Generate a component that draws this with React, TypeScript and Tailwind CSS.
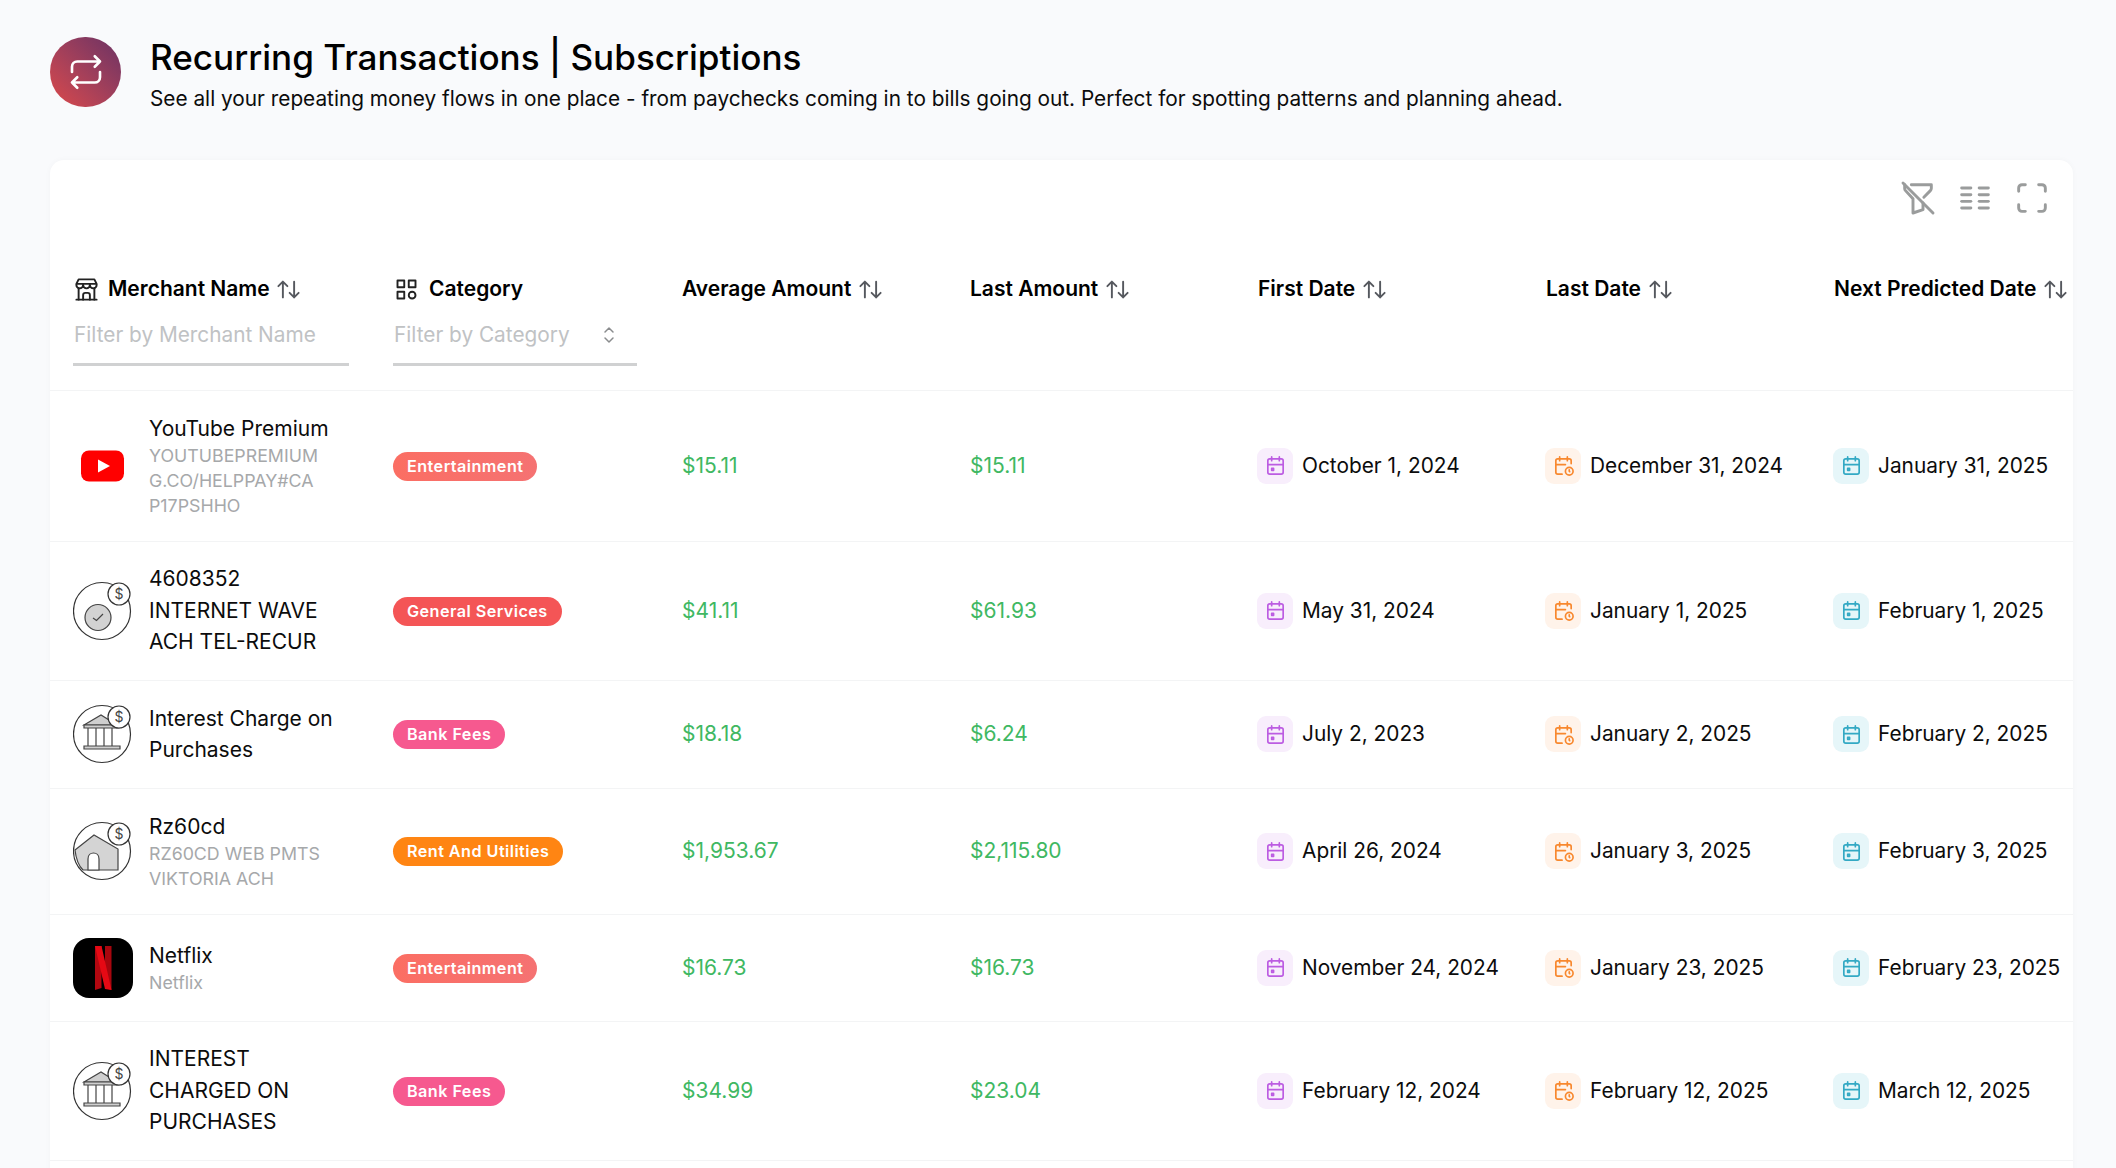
import {
  TbArrowsSort,
  TbBuildingStore,
  TbCalendarClock,
  TbCalendarEvent,
  TbCategory,
  TbColumns,
  TbFilterOff,
  TbMaximize,
  TbRepeat,
  TbSelector,
} from 'react-icons/tb';

type Logo = 'youtube' | 'clock' | 'bank' | 'house' | 'netflix';

interface Row {
  height: string;
  logo: Logo;
  name: string;
  sub?: string;
  category: string;
  badge: string;
  average: string;
  last: string;
  first: string;
  lastDate: string;
  next: string;
}

const rows: Row[] = [
  {
    height: 'h-[151px]',
    logo: 'youtube',
    name: 'YouTube Premium',
    sub: 'YOUTUBEPREMIUM G.CO/HELPPAY#CA P17PSHHO',
    category: 'Entertainment',
    badge: 'bg-linear-to-r from-[#fb6e63] to-[#f57272]',
    average: '$15.11',
    last: '$15.11',
    first: 'October 1, 2024',
    lastDate: 'December 31, 2024',
    next: 'January 31, 2025',
  },
  {
    height: 'h-[139px]',
    logo: 'clock',
    name: '4608352 INTERNET WAVE ACH TEL-RECUR',
    category: 'General Services',
    badge: 'bg-[#f45556]',
    average: '$41.11',
    last: '$61.93',
    first: 'May 31, 2024',
    lastDate: 'January 1, 2025',
    next: 'February 1, 2025',
  },
  {
    height: 'h-[108px]',
    logo: 'bank',
    name: 'Interest Charge on Purchases',
    category: 'Bank Fees',
    badge: 'bg-[#f6598f]',
    average: '$18.18',
    last: '$6.24',
    first: 'July 2, 2023',
    lastDate: 'January 2, 2025',
    next: 'February 2, 2025',
  },
  {
    height: 'h-[126px]',
    logo: 'house',
    name: 'Rz60cd',
    sub: 'RZ60CD WEB PMTS VIKTORIA ACH',
    category: 'Rent And Utilities',
    badge: 'bg-[#ff8513]',
    average: '$1,953.67',
    last: '$2,115.80',
    first: 'April 26, 2024',
    lastDate: 'January 3, 2025',
    next: 'February 3, 2025',
  },
  {
    height: 'h-[107px]',
    logo: 'netflix',
    name: 'Netflix',
    sub: 'Netflix',
    category: 'Entertainment',
    badge: 'bg-linear-to-r from-[#fb6e63] to-[#f57272]',
    average: '$16.73',
    last: '$16.73',
    first: 'November 24, 2024',
    lastDate: 'January 23, 2025',
    next: 'February 23, 2025',
  },
  {
    height: 'h-[139px]',
    logo: 'bank',
    name: 'INTEREST CHARGED ON PURCHASES',
    category: 'Bank Fees',
    badge: 'bg-[#f6598f]',
    average: '$34.99',
    last: '$23.04',
    first: 'February 12, 2024',
    lastDate: 'February 12, 2025',
    next: 'March 12, 2025',
  },
];

function DollarBadge({ cx = 46, cy = 13 }: { cx?: number; cy?: number }) {
  return (
    <g>
      <circle cx={cx} cy={cy} r="11" fill="#fff" stroke="#333" strokeWidth="1.2" />
      <text x={cx} y={cy + 5} textAnchor="middle" fontSize="14" fill="#444" fontFamily="Inter, sans-serif">
        $
      </text>
    </g>
  );
}

function MerchantLogo({ logo }: { logo: Logo }) {
  if (logo === 'youtube') {
    return (
      <svg width="60" height="60" viewBox="0 0 60 60">
        <rect x="8" y="14.5" width="43" height="31" rx="8" fill="#f00" />
        <path d="M25 23.5 L25 36.5 L37 30 Z" fill="#fff" />
      </svg>
    );
  }
  if (logo === 'netflix') {
    return (
      <svg width="60" height="60" viewBox="0 0 60 60">
        <rect width="60" height="60" rx="16" fill="#000" />
        <path d="M22 8 H28.5 V50 L22 52 Z" fill="#b20710" />
        <path d="M32 8 H38.5 V52 L32 50 Z" fill="#a8060e" />
        <path d="M22 8 H28.5 L38.5 52 L32 51 Z" fill="#e50914" />
      </svg>
    );
  }
  return (
    <svg width="60" height="60" viewBox="0 0 60 60">
      <circle cx="29" cy="30" r="28.5" fill="#fff" stroke="#333" strokeWidth="1.2" />
      {logo === 'clock' && (
        <g>
          <circle cx="25" cy="36.5" r="13" fill="#d2d2d2" stroke="#444" strokeWidth="1.2" />
          <path d="M20 37 L23.5 39.5 L30 33" fill="none" stroke="#444" strokeWidth="1.2" />
        </g>
      )}
      {logo === 'bank' && (
        <g stroke="#444" strokeWidth="1.2">
          <path d="M11 21 L28 11 L44 21 Z" fill="#cfcfcf" />
          <path d="M11 21 H46 V24 H11 Z" fill="#cfcfcf" />
          <path d="M15 24 V42 M23 24 V42 M31 24 V42 M39 24 V42" fill="none" />
          <path d="M11 42 H47 V45 H11 Z" fill="#cfcfcf" />
        </g>
      )}
      {logo === 'house' && (
        <g stroke="#444" strokeWidth="1.2">
          <path d="M2 29 L21 14 L45 28 V49 H10 C6 45 3 38 2 29 Z" fill="#d4d4d4" />
          <path d="M15 49 V38 C15 30 26 30 26 38 V49 Z" fill="#fff" />
        </g>
      )}
      <DollarBadge />
    </svg>
  );
}

function SortIcon() {
  return <TbArrowsSort className="h-[27px] w-[27px] shrink-0 text-[#55585e]" strokeWidth={1.7} />;
}

function HeadCell({ label }: { label: string }) {
  return (
    <th className="px-[23px] pt-[42px] text-left align-top">
      <div className="flex h-[30px] items-center gap-[5.5px] whitespace-nowrap text-[21px] font-semibold text-black">
        {label}
        <SortIcon />
      </div>
    </th>
  );
}

function DateCell({ value, kind }: { value: string; kind: 'first' | 'last' | 'next' }) {
  const box =
    kind === 'first'
      ? 'bg-[#f8eefc] text-[#bc5ce2]'
      : kind === 'last'
        ? 'bg-[#fff3ea] text-[#f8882e]'
        : 'bg-[#e6f6f9] text-[#33a9c4]';
  return (
    <td className="px-[22px]">
      <div className="flex items-center gap-[9px] whitespace-nowrap text-[20.85px] text-[#0c0c0c]">
        <span className={`flex h-[36px] w-[36px] shrink-0 items-center justify-center rounded-[9px] ${box}`}>
          {kind === 'last' ? (
            <TbCalendarClock className="h-[23px] w-[23px]" strokeWidth={1.75} />
          ) : (
            <TbCalendarEvent className="h-[23px] w-[23px]" strokeWidth={1.75} />
          )}
        </span>
        {value}
      </div>
    </td>
  );
}

export default function App() {
  return (
    <div className="h-screen overflow-hidden bg-[#f9fafc] pl-[50px] pr-[43px] pt-[37px] font-['Inter',sans-serif]">
      <header className="flex items-start gap-[29px]">
        <div className="flex h-[70px] w-[71px] shrink-0 items-center justify-center rounded-full bg-linear-to-tr from-[#dc4848] to-[#6b3163]">
          <TbRepeat className="h-[42px] w-[42px] text-white" strokeWidth={1.5} />
        </div>
        <div>
          <h1 className="text-[35.1px] leading-[41px] font-medium text-black">Recurring Transactions | Subscriptions</h1>
          <p className="mt-[6px] text-[20.8px] leading-[30px] text-[#0c0c0c]">
            See all your repeating money flows in one place - from paychecks coming in to bills going out. Perfect for
            spotting patterns and planning ahead.
          </p>
        </div>
      </header>

      <section className="mt-[46px] min-h-[1100px] overflow-hidden rounded-t-[14px] bg-white shadow-[0_0_6px_rgba(0,0,0,0.03)]">
        <div className="flex h-[72px] items-center justify-end gap-[17px] pt-[4px] pr-[21px] text-[#9a9c9c]">
          <TbFilterOff className="h-[40px] w-[40px]" strokeWidth={1.75} />
          <TbColumns className="h-[40px] w-[40px]" strokeWidth={1.75} />
          <TbMaximize className="h-[40px] w-[40px]" strokeWidth={1.75} />
        </div>

        <table className="w-[2049px] table-fixed border-collapse">
          <colgroup>
            <col className="w-[321px]" />
            <col className="w-[288px]" />
            <col className="w-[288px]" />
            <col className="w-[288px]" />
            <col className="w-[288px]" />
            <col className="w-[288px]" />
            <col className="w-[288px]" />
          </colgroup>
          <thead>
            <tr className="h-[158px] border-b border-[#f3f4f5]">
              <th className="pt-[42px] pr-[22px] pl-[23px] text-left align-top">
                <div className="flex h-[30px] items-center whitespace-nowrap text-[21px] font-semibold text-black">
                  <TbBuildingStore className="mr-[8px] h-[27px] w-[27px] text-[#222]" strokeWidth={1.7} />
                  Merchant Name
                  <span className="ml-[5.5px]">
                    <SortIcon />
                  </span>
                </div>
                <div className="flex h-[62px] items-center whitespace-nowrap border-b-[3px] border-[#d0d1d2] pt-[3px] pl-[1px] text-[20.8px] font-normal text-[#c0c2c4]">
                  Filter by Merchant Name
                </div>
              </th>
              <th className="px-[22px] pt-[42px] text-left align-top">
                <div className="flex h-[30px] items-center whitespace-nowrap text-[21px] font-semibold text-black">
                  <TbCategory className="mr-[9px] h-[27px] w-[27px] text-[#222]" strokeWidth={1.7} />
                  Category
                </div>
                <div className="flex h-[62px] items-center justify-between whitespace-nowrap border-b-[3px] border-[#d0d1d2] pt-[3px] pr-[16px] pl-[1px] text-[20.8px] font-normal text-[#c0c2c4]">
                  Filter by Category
                  <TbSelector className="h-[24px] w-[24px] text-[#8a8c8e]" strokeWidth={1.5} />
                </div>
              </th>
              <HeadCell label="Average Amount" />
              <HeadCell label="Last Amount" />
              <HeadCell label="First Date" />
              <HeadCell label="Last Date" />
              <HeadCell label="Next Predicted Date" />
            </tr>
          </thead>
          <tbody>
            {rows.map((row) => (
              <tr key={row.name} className={`${row.height} border-b border-[#f3f4f5]`}>
                <td className="pl-[23px] pr-[14px]">
                  <div className="flex items-center gap-[16px]">
                    <span className="shrink-0">
                      <MerchantLogo logo={row.logo} />
                    </span>
                    <div className="max-w-[190px] min-w-0">
                      <div className="text-[21px] leading-[31.4px] text-[#0c0c0c]">{row.name}</div>
                      {row.sub && (
                        <div className="-mt-[1.5px] text-[17.8px] leading-[25px] text-[#a6a8aa]">{row.sub}</div>
                      )}
                    </div>
                  </div>
                </td>
                <td className="px-[22px] pt-[1px]">
                  <span
                    className={`inline-flex h-[29px] items-center rounded-full px-[14px] text-[16.2px] font-semibold tracking-[0.45px] whitespace-nowrap text-white ${row.badge}`}
                  >
                    {row.category}
                  </span>
                </td>
                <td className="px-[23px] text-[21px] text-[#40b862]">{row.average}</td>
                <td className="px-[23px] text-[21px] text-[#40b862]">{row.last}</td>
                <DateCell value={row.first} kind="first" />
                <DateCell value={row.lastDate} kind="last" />
                <DateCell value={row.next} kind="next" />
              </tr>
            ))}
          </tbody>
        </table>
      </section>
    </div>
  );
}
